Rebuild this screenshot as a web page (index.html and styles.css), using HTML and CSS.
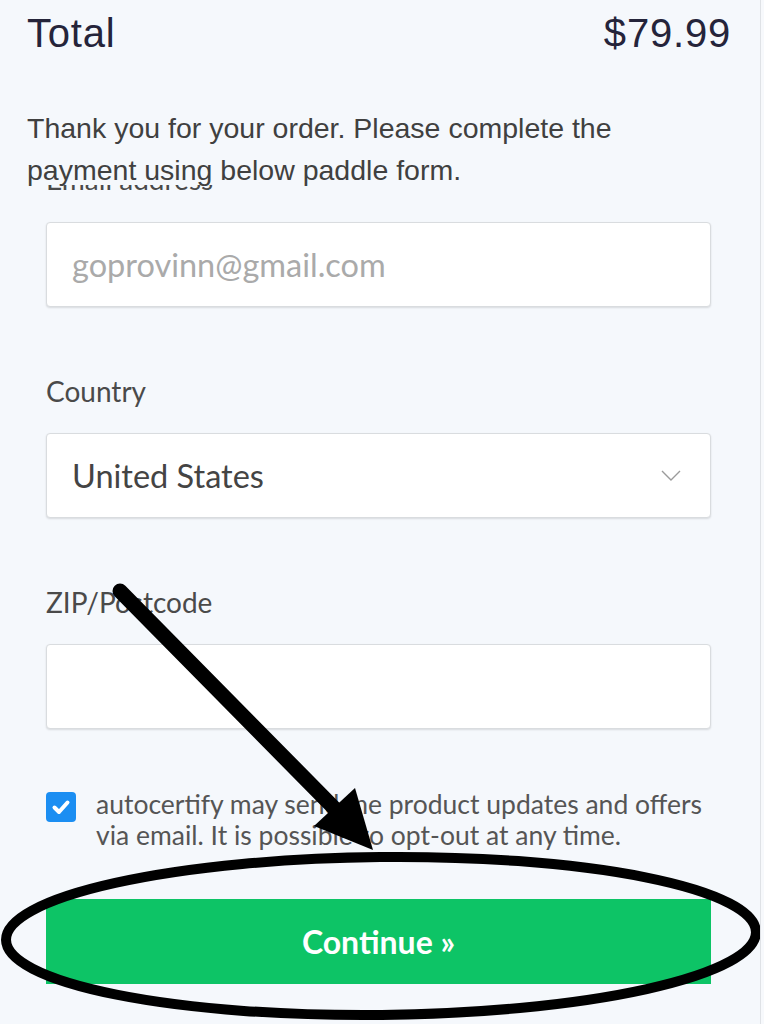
FILE: index.html
```html
<!DOCTYPE html>
<html lang="en">
<head>
    <meta charset="UTF-8">
    <meta name="viewport" content="width=device-width, initial-scale=1.0">
    <title>Checkout</title>
    <link rel="stylesheet" href="styles.css">
</head>
<body>
    <div class="page">
        <div class="summary">
            <span>Total</span>
            <span>$79.99</span>
        </div>

        <p class="note">Thank you for your order. Please complete the payment using below paddle form.</p>

        <div class="paddle-frame">
            <div class="frame-body">
                <div class="field">
                    <label class="clipped"><span>Email address</span></label>
                    <div class="input placeholder">goprovinn@gmail.com</div>
                </div>

                <div class="field">
                    <label>Country</label>
                    <div class="input select">
                        <span>United States</span>
                        <svg class="chevron" width="20" height="11" viewBox="0 0 20 11">
                            <polyline points="1,1 10,10 19,1" fill="none" stroke="#9b9b9b" stroke-width="1.4"/>
                        </svg>
                    </div>
                </div>

                <div class="field">
                    <label>ZIP/Postcode</label>
                    <div class="input"></div>
                </div>

                <div class="consent">
                    <span class="checkbox">
                        <svg width="30" height="30" viewBox="0 0 30 30">
                            <polyline points="8.5,15.5 13,20 21.5,10.5" fill="none" stroke="#fff" stroke-width="4" stroke-linecap="round" stroke-linejoin="round"/>
                        </svg>
                    </span>
                    <p>autocertify may send me product updates and offers via email. It is possible to opt-out at any time.</p>
                </div>

                <button class="continue">Continue &raquo;</button>
            </div>
        </div>

        <!-- hand drawn marks on top of the screenshot -->
        <svg class="marks" width="764" height="1024" viewBox="0 0 764 1024">
            <line x1="120" y1="591" x2="338" y2="812" stroke="#000" stroke-width="15" stroke-linecap="round"/>
            <polygon points="314,826 355,788 373,850" fill="#000"/>
            <ellipse cx="381" cy="936" rx="375" ry="79" fill="none" stroke="#000" stroke-width="10" transform="rotate(-0.6 381 936)"/>
        </svg>
    </div>
</body>
</html>
```

FILE: styles.css
```css
body {
    margin: 0;
    background-color: #f7f9fc;
    font-family: "Liberation Sans", Arial, sans-serif;
}

.page {
    position: relative;
    width: 760px;
    height: 1024px;
    overflow: hidden;
    background-color: #f5f8fc;
    border-right: 1px solid #dfe2e6;
}

.summary {
    display: flex;
    justify-content: space-between;
    padding: 13px 29px 0 27px;
    font-size: 40px;
    line-height: 40px;
    letter-spacing: 0.8px;
    color: #25243a;
}

.note {
    max-width: 620px;
    margin: 54px 0 0;
    padding: 0 0 0 27px;
    font-size: 28.5px;
    line-height: 42px;
    color: #404040;
}

.paddle-frame {
    margin-top: -6px;
}

.frame-body {
    margin-left: 46px;
    width: 665px;
    font-family: Lato, "Open Sans", sans-serif;
}

.field {
    margin-bottom: 69px;
}

.field label {
    display: block;
    margin-bottom: 27px;
    font-size: 28px;
    line-height: 30px;
    color: #4a4a4a;
}

/* the top of the payment frame is scrolled away, only the foot of this label shows */
.field label.clipped {
    height: 6px;
    overflow: hidden;
    margin-bottom: 31px;
}

.field label.clipped span {
    display: block;
    margin-top: -21px;
}

.input {
    box-sizing: border-box;
    height: 85px;
    display: flex;
    align-items: center;
    justify-content: space-between;
    padding: 0 29px 0 25px;
    background: #fff;
    border: 1px solid #d9dcdf;
    border-radius: 4px;
    box-shadow: 0 1px 2px rgba(0, 0, 0, 0.12);
    font-size: 32.5px;
    color: #444;
}

.placeholder {
    color: #aaa;
}

.consent {
    display: flex;
    gap: 20px;
    margin: -9px -20px 0 0;
}

.checkbox {
    flex: none;
    width: 30px;
    height: 30px;
    margin-top: 3px;
    background: #1b8ef2;
    border-radius: 4px;
}

.checkbox svg {
    display: block;
}

.consent p {
    margin: 0;
    font-size: 26.5px;
    line-height: 31px;
    color: #555;
}

.continue {
    display: block;
    width: 100%;
    height: 85px;
    margin-top: 48px;
    border: none;
    background: #0dc466;
    color: #fff;
    font-family: Lato, sans-serif;
    font-weight: 700;
    font-size: 32px;
}

.marks {
    position: absolute;
    top: 0;
    left: 0;
}
```
